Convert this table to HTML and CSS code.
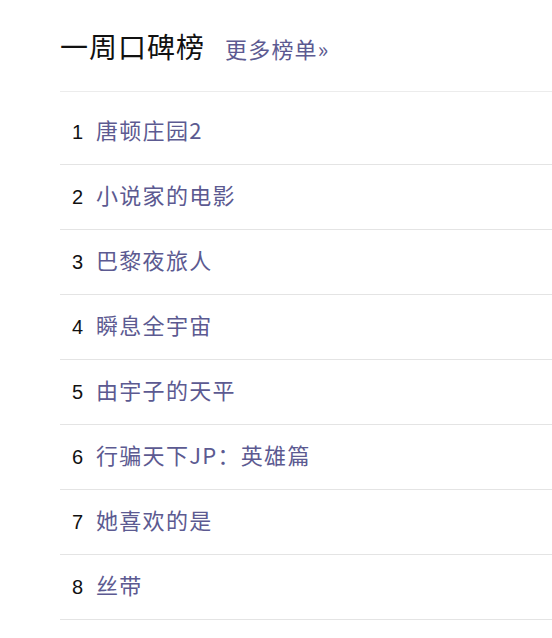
FILE: index.html
```html
<!DOCTYPE html>
<html lang="zh-CN">
<head>
<meta charset="utf-8">
<title>一周口碑榜</title>
<link rel="stylesheet" href="styles.css">
</head>
<body>
<div class="board">
  <div class="board-head">
    <h2 class="board-title">一周口碑榜</h2>
    <a class="board-more" href="#">更多榜单»</a>
  </div>
  <ul class="board-list">
    <li class="board-item"><span class="rank">1</span><a class="name" href="#">唐顿庄园2</a></li>
    <li class="board-item"><span class="rank">2</span><a class="name" href="#">小说家的电影</a></li>
    <li class="board-item"><span class="rank">3</span><a class="name" href="#">巴黎夜旅人</a></li>
    <li class="board-item"><span class="rank">4</span><a class="name" href="#">瞬息全宇宙</a></li>
    <li class="board-item"><span class="rank">5</span><a class="name" href="#">由宇子的天平</a></li>
    <li class="board-item"><span class="rank">6</span><a class="name" href="#">行骗天下JP：英雄篇</a></li>
    <li class="board-item"><span class="rank">7</span><a class="name" href="#">她喜欢的是</a></li>
    <li class="board-item"><span class="rank">8</span><a class="name" href="#">丝带</a></li>
  </ul>
</div>
</body>
</html>
```
FILE: styles.css
```css
html, body {
  margin: 0;
  padding: 0;
  background: #fff;
  overflow: hidden;
}
body {
  font-family: "Liberation Sans", "Noto Sans CJK SC", sans-serif;
}
.board {
  margin-left: 60px;
}
.board-head {
  display: flex;
  align-items: baseline;
  height: 92px;
  border-bottom: 1px solid #ececec;
  box-sizing: border-box;
}
.board-title {
  margin: 26px 0 0 0;
  font-family: "Noto Sans CJK SC", sans-serif;
  font-size: 28px;
  font-weight: normal;
  color: #111;
  line-height: 40px;
  letter-spacing: 1px;
}
.board-more {
  margin-left: 20px;
  font-family: "Noto Sans CJK SC", sans-serif;
  font-size: 22px;
  color: #5c5a91;
  text-decoration: none;
  letter-spacing: 1.2px;
}
.board-list {
  list-style: none;
  margin: 0;
  padding: 8px 0 0 0;
}
.board-item {
  height: 65px;
  line-height: 58px;
  border-bottom: 1px solid #e4e4e4;
  box-sizing: border-box;
  white-space: nowrap;
}
.rank {
  display: inline-block;
  width: 36px;
  padding-left: 12px;
  box-sizing: border-box;
  font-size: 20px;
  color: #111;
}
.name {
  font-family: "Noto Sans CJK SC", sans-serif;
  font-size: 22px;
  color: #5c5a91;
  text-decoration: none;
  letter-spacing: 1.3px;
}
```
